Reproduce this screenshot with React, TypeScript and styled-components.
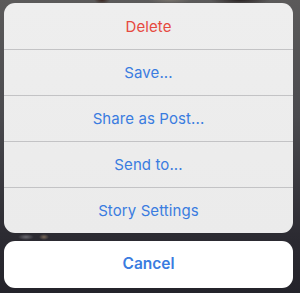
import React from "react";
import styled, { createGlobalStyle } from "styled-components";

const Global = createGlobalStyle`
  html, body { margin: 0; padding: 0; }
  body {
    width: 300px;
    height: 293px;
    overflow: hidden;
    background:
      radial-gradient(ellipse 8px 4px at 102px 0px, #3a2620 0%, transparent 100%),
      radial-gradient(ellipse 22px 4px at 170px 0px, #77726c 0%, transparent 100%),
      radial-gradient(ellipse 30px 5px at 240px 0px, #2a2424 0%, transparent 100%),
      radial-gradient(ellipse 8px 3px at 26px 237px, #6a6a70 0%, transparent 100%),
      radial-gradient(ellipse 5px 3px at 44px 237px, #7a6a5a 0%, transparent 100%),
      linear-gradient(180deg, #5b5a5a 0%, #4a4a4e 40%, #2c2b32 80%, #24232a 100%);
    font-family: Inter, "Noto Sans", sans-serif;
    -webkit-font-smoothing: antialiased;
  }
`;

const Screen = styled.div`
  width: 300px;
  height: 293px;
  box-sizing: border-box;
  padding: 3px 7px 0 4px;
  display: flex;
  flex-direction: column;
  gap: 8px;
`;

const Group = styled.div`
  display: flex;
  flex-direction: column;
  border-radius: 11px;
  overflow: hidden;
  background: linear-gradient(180deg, #eeeeee 0%, #ebebeb 100%);
`;

const Row = styled.div<{ $color: string }>`
  height: 46px;
  display: flex;
  align-items: center;
  justify-content: center;
  font-size: 15px;
  color: ${(p) => p.$color};
  letter-spacing: 0.1px;
  & + & {
    border-top: 1px solid #c3c3c5;
    height: 45px;
  }
`;

const CancelCard = styled.div`
  height: 47px;
  border-radius: 11px;
  background: #ffffff;
  display: flex;
  align-items: center;
  justify-content: center;
  padding-bottom: 3px;
  box-sizing: border-box;
  font-size: 15.5px;
  font-weight: 600;
  color: #3a7ce0;
`;

const items: { label: string; color: string }[] = [
  { label: "Delete", color: "#e6493f" },
  { label: "Save...", color: "#3a7ce0" },
  { label: "Share as Post...", color: "#3a7ce0" },
  { label: "Send to...", color: "#3a7ce0" },
  { label: "Story Settings", color: "#3a7ce0" },
];

export default function App() {
  return (
    <>
      <Global />
      <Screen>
        <Group>
          {items.map((it) => (
            <Row key={it.label} $color={it.color}>
              {it.label}
            </Row>
          ))}
        </Group>
        <CancelCard>Cancel</CancelCard>
      </Screen>
    </>
  );
}
